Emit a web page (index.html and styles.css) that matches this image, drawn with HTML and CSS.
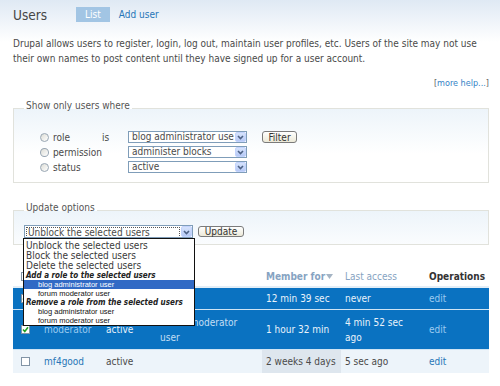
FILE: index.html
```html
<!DOCTYPE html>
<html lang="en">
<head>
    <meta charset="UTF-8">
    <title>Users</title>
    <link rel="stylesheet" href="styles.css">
</head>
<body>
    <div class="page">
        <div class="title-bar">
            <h2>Users</h2>
            <ul class="tabs">
                <li><a class="active" href="#">List</a></li>
                <li><a href="#">Add user</a></li>
            </ul>
        </div>

        <p class="intro">Drupal allows users to register, login, log out, maintain user profiles, etc. Users of the site may not use their own names to post content until they have signed up for a user account.</p>
        <div class="more-help">[<a href="#">more help...</a>]</div>

        <fieldset class="box">
            <legend>Show only users where</legend>
            <div class="filters">
                <label class="radio"><span class="dot"></span>role</label>
                <span class="is">is</span>
                <div class="select">
                    <span class="value">blog administrator use</span>
                    <span class="arrow"><svg width="9" height="8" viewBox="0 0 9 8"><polyline points="2,3 4.5,5.5 7,3" fill="none" stroke="#4d6185" stroke-width="1.6"/></svg></span>
                </div>
                <button class="btn">Filter</button>

                <label class="radio"><span class="dot"></span>permission</label>
                <span></span>
                <div class="select">
                    <span class="value">administer blocks</span>
                    <span class="arrow"><svg width="9" height="8" viewBox="0 0 9 8"><polyline points="2,3 4.5,5.5 7,3" fill="none" stroke="#4d6185" stroke-width="1.6"/></svg></span>
                </div>
                <span></span>

                <label class="radio"><span class="dot"></span>status</label>
                <span></span>
                <div class="select">
                    <span class="value">active</span>
                    <span class="arrow"><svg width="9" height="8" viewBox="0 0 9 8"><polyline points="2,3 4.5,5.5 7,3" fill="none" stroke="#4d6185" stroke-width="1.6"/></svg></span>
                </div>
                <span></span>
            </div>
        </fieldset>

        <fieldset class="box update-box">
            <legend>Update options</legend>
            <div class="update-row">
                <div class="select wide">
                    <span class="value"><span class="focus">Unblock the selected users</span></span>
                    <span class="arrow"><svg width="9" height="8" viewBox="0 0 9 8"><polyline points="2,3 4.5,5.5 7,3" fill="none" stroke="#4d6185" stroke-width="1.6"/></svg></span>
                    <!-- open list of the select -->
                    <ul class="dropdown">
                        <li>Unblock the selected users</li>
                        <li>Block the selected users</li>
                        <li>Delete the selected users</li>
                        <li class="group">Add a role to the selected users</li>
                        <li class="sub hl">blog administrator user</li>
                        <li class="sub">forum moderator user</li>
                        <li class="group">Remove a role from the selected users</li>
                        <li class="sub">blog administrator user</li>
                        <li class="sub">forum moderator user</li>
                    </ul>
                </div>
                <button class="btn">Update</button>
            </div>
        </fieldset>

        <table class="users">
            <colgroup>
                <col class="w-check">
                <col class="w-name">
                <col class="w-status">
                <col class="w-roles">
                <col class="w-member">
                <col class="w-access">
                <col class="w-ops">
            </colgroup>
            <thead>
                <tr>
                    <th class="c-check"><span class="check"></span></th>
                    <th></th>
                    <th></th>
                    <th></th>
                    <th class="active"><a href="#">Member for</a><svg class="sort-icon" width="7" height="5" viewBox="0 0 7 5"><polygon points="0,0 7,0 3.5,5" fill="#a5b4c4"/></svg></th>
                    <th><a href="#">Last access</a></th>
                    <th class="ops">Operations</th>
                </tr>
            </thead>
            <tbody>
                <tr class="selected r1">
                    <td class="c-check"><span class="check"><svg width="7" height="7" viewBox="0 0 7 7"><polyline points="1,3.5 2.8,5.5 6,1.2" fill="none" stroke="#21a121" stroke-width="1.6"/></svg></span></td>
                    <td></td>
                    <td></td>
                    <td class="roles"></td>
                    <td>12 min 39 sec</td>
                    <td class="last">never</td>
                    <td><a href="#">edit</a></td>
                </tr>
                <tr class="selected r2">
                    <td class="c-check"><span class="check"><svg width="7" height="7" viewBox="0 0 7 7"><polyline points="1,3.5 2.8,5.5 6,1.2" fill="none" stroke="#21a121" stroke-width="1.6"/></svg></span></td>
                    <td><a href="#">moderator</a></td>
                    <td>active</td>
                    <td class="roles">forum moderator user</td>
                    <td>1 hour 32 min</td>
                    <td class="last">4 min 52 sec ago</td>
                    <td><a href="#">edit</a></td>
                </tr>
                <tr class="r3">
                    <td class="c-check"><span class="check"></span></td>
                    <td><a href="#">mf4good</a></td>
                    <td>active</td>
                    <td class="roles"></td>
                    <td class="sorted">2 weeks 4 days</td>
                    <td class="last">5 sec ago</td>
                    <td><a href="#">edit</a></td>
                </tr>
            </tbody>
        </table>
    </div>
</body>
</html>
```

FILE: styles.css
```css
body {
    margin: 0;
    font-family: "DejaVu Sans Condensed", "DejaVu Sans", sans-serif;
    font-size: 10px;
    color: #4a4a4a;
    background: #fff linear-gradient(#dfe9f4, #fff 42px) no-repeat;
}
a {
    color: #2776b7;
    text-decoration: none;
}
.page {
    padding: 0 11px 0 13px;
}
.title-bar {
    display: flex;
    align-items: center;
    height: 29px;
}
.title-bar h2 {
    margin: 0 29px 0 0;
    font-size: 13.5px;
    font-weight: normal;
    color: #454545;
}
.tabs {
    display: flex;
    gap: 9px;
    margin: 0;
    padding: 0;
    list-style: none;
}
.tabs a {
    display: block;
    line-height: 15px;
}
.tabs a.active {
    background: #a2c5e4;
    color: #fff;
    padding: 0 9px;
}
.intro {
    margin: 7px 0 0;
    line-height: 15px;
}
.more-help {
    text-align: right;
    font-size: 9px;
    line-height: 14px;
    margin-top: 10px;
    color: #666;
}
.more-help a {
    color: #3583c6;
}
.box {
    margin: 9px 0 0;
    padding: 0 10px 9px;
    border: 1px solid #e1e2dc;
    background: #fff linear-gradient(#edf4fa, #fff 45px);
}
.box legend {
    padding: 0 2px 4px;
    line-height: 14px;
    color: #555;
}
.filters {
    display: grid;
    grid-template-columns: 62px 26px 119px auto;
    grid-auto-rows: 12px;
    row-gap: 3px;
    align-items: center;
    margin: 14px 0 0 16px;
}
.radio {
    display: flex;
    align-items: center;
}
.dot {
    width: 9px;
    height: 9px;
    box-sizing: border-box;
    border: 1px solid #98a6b3;
    border-radius: 50%;
    background: linear-gradient(135deg, #dcdcd5, #fff);
    margin-right: 4px;
}
.select {
    position: relative;
    display: flex;
    height: 12px;
    box-sizing: border-box;
    border: 1px solid #7f9db9;
    background: #fff;
}
.select .value {
    flex: 1;
    overflow: hidden;
    white-space: nowrap;
    padding-left: 3px;
    line-height: 10px;
}
.select .arrow {
    width: 11px;
    box-sizing: border-box;
    display: flex;
    align-items: center;
    justify-content: center;
    background: linear-gradient(#d6e3fc, #b6c9f5);
    border: 1px solid #c3d3fd;
    border-radius: 2px;
}
.btn {
    justify-self: start;
    margin-left: 15px;
    height: 12px;
    width: 35px;
    padding: 0;
    font: inherit;
    line-height: 9px;
    color: #333;
    border: 1px solid #7b7b7b;
    border-radius: 3px;
    background: linear-gradient(#fff, #ece9d8);
}
.update-box {
    margin-top: 18px;
    padding-bottom: 6px;
}
.update-row {
    display: flex;
    align-items: center;
    margin-top: 6px;
}
.select.wide {
    width: 169px;
    height: 13px;
}
.select.wide .value {
    padding: 1px 1px 0;
    line-height: 9px;
}
.focus {
    display: block;
    border: 1px dotted #555;
    padding-left: 1px;
}
.update-row .btn {
    margin-left: 5px;
    width: 46px;
    height: 11px;
}
.dropdown {
    position: absolute;
    left: -2px;
    top: 12px;
    width: 172px;
    box-sizing: border-box;
    margin: 0;
    padding: 2px 0 0;
    list-style: none;
    border: 1px solid #111;
    background: #fff;
    z-index: 5;
}
.dropdown li {
    height: 10px;
    line-height: 10px;
    padding-left: 2px;
    color: #3a3a3a;
    white-space: nowrap;
}
.dropdown li.group {
    height: 9px;
    line-height: 9px;
    font-size: 8px;
    font-weight: bold;
    font-style: italic;
    color: #222;
}
.dropdown li.sub {
    height: 9px;
    line-height: 9px;
    padding-left: 14px;
    font-family: "Liberation Sans", Arial, sans-serif;
    font-size: 7.5px;
    color: #111;
}
.dropdown li.hl {
    background: #316ac5;
    color: #fff;
}
.users {
    margin-top: 22px;
    width: 476px;
    table-layout: fixed;
    border-spacing: 0;
}
.w-check { width: 27px; }
.w-name { width: 62px; }
.w-status { width: 54px; }
.w-roles { width: 106px; }
.w-member { width: 79px; }
.w-access { width: 84px; }
.w-ops { width: 64px; }
.users th {
    height: 19px;
    padding: 0 4px;
    text-align: left;
    font-weight: normal;
    border-bottom: 2px solid #e3eef7;
}
.users th a {
    color: #86a3c2;
}
.users th.active a {
    font-weight: bold;
}
.users th.ops {
    font-weight: bold;
    color: #333;
}
.sort-icon {
    margin-left: 1px;
    vertical-align: 1px;
}
.users td {
    padding: 0 4px;
    line-height: 15px;
    vertical-align: middle;
    border-bottom: 1px solid #cfe4f4;
}
.users .c-check {
    padding-left: 8px;
}
.users td.roles {
    padding-right: 12px;
}
.users td.last {
    padding-right: 9px;
}
tr.r1 {
    height: 22px;
}
tr.r2 {
    height: 40px;
}
tr.r3 {
    height: 23px;
}
tr.selected td {
    background: #0a72c1;
    color: #e9f2fb;
}
tr.selected td a {
    color: #9ccbf0;
}
tr.selected td.roles {
    color: #c4def4;
}
tr.r3 td {
    background: #edf4fa;
    border-bottom: none;
}
tr.r3 td.sorted {
    background: #dee6ee;
}
.check {
    display: flex;
    align-items: center;
    justify-content: center;
    width: 9px;
    height: 9px;
    box-sizing: border-box;
    border: 1px solid #8294a6;
    background: #fff;
}
```
